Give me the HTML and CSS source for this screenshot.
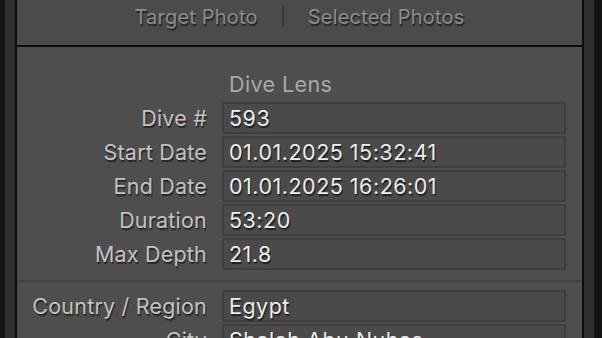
FILE: index.html
```html
<!DOCTYPE html>
<html lang="en">
<head>
    <meta charset="UTF-8">
    <meta name="viewport" content="width=device-width, initial-scale=1.0">
    <title>Dive Lens</title>
    <link rel="stylesheet" href="styles.css">
</head>
<body>

    <div class="edge"></div>
    <div class="rail"></div>

    <div class="panel">
        <div class="tabs">
            <span class="tab">Target Photo</span>
            <span class="tab-divider"></span>
            <span class="tab">Selected Photos</span>
        </div>

        <div class="content">
            <div class="section-title">Dive Lens</div>

            <div class="fields">
                <label class="label">Dive #</label>
                <div class="value">593</div>

                <label class="label">Start Date</label>
                <div class="value">01.01.2025 15:32:41</div>

                <label class="label">End Date</label>
                <div class="value">01.01.2025 16:26:01</div>

                <label class="label">Duration</label>
                <div class="value">53:20</div>

                <label class="label">Max Depth</label>
                <div class="value">21.8</div>
            </div>

            <div class="separator"></div>

            <div class="fields">
                <label class="label">Country / Region</label>
                <div class="value">Egypt</div>

                <label class="label">City</label>
                <div class="value">Shalah Abu Nuhas</div>
            </div>
        </div>
    </div>

    <div class="rail rail-right"></div>
    <div class="edge edge-right"></div>

</body>
</html>
```

FILE: styles.css
```css
body {
    margin: 0;
    height: 338px;
    overflow: hidden;
    display: flex;
    background-color: #111111;
    font-family: 'Inter', 'Noto Sans', sans-serif;
}

.edge {
    width: 5px;
    background-color: #141414;
}

.edge-right {
    width: 8px;
}

.rail {
    width: 10px;
    background-color: #2f2f2f;
}

.panel {
    flex: 1;
    border-left: 2px solid #0c0c0c;
    border-right: 2px solid #0c0c0c;
    background-color: #4e4e4e;
    display: flex;
    flex-direction: column;
}

/* top switch */
.tabs {
    flex-shrink: 0;
    height: 47px;
    box-sizing: border-box;
    padding-top: 5px;
    display: flex;
    justify-content: center;
    gap: 24px;
    background-color: #4b4b4b;
    border-bottom: 2px solid #0c0c0c;
}

.tab {
    font-size: 20px;
    line-height: 24px;
    letter-spacing: 0.2px;
    color: #8b8b8b;
    text-shadow: 1px 2px 1px rgba(0,0,0,0.55);
}

.tab-divider {
    width: 2px;
    height: 21px;
    margin-top: 1px;
    background-color: #393939;
}

.content {
    flex-shrink: 0;
    padding-top: 25px;
}

.section-title {
    margin-left: 212px;
    font-size: 21.5px;
    line-height: 24px;
    letter-spacing: 0.4px;
    color: #a9a9a9;
    margin-bottom: 6px;
}

.fields {
    display: grid;
    grid-template-columns: 190px 1fr;
    column-gap: 15px;
    row-gap: 2px;
    padding-right: 16px;
}

.label {
    text-align: right;
    align-self: center;
    font-size: 21.5px;
    letter-spacing: 0.2px;
    color: #c2c2c2;
    text-shadow: 1px 2px 1px rgba(0,0,0,0.55);
}

.value {
    height: 32px;
    box-sizing: border-box;
    border: 2px solid #3f3f3f;
    background-color: #4a4a4a;
    padding-left: 5px;
    font-size: 21.5px;
    line-height: 28px;
    letter-spacing: 0.5px;
    color: #ececec;
    text-shadow: 1px 2px 1px rgba(0,0,0,0.6);
}

.separator {
    height: 2px;
    background-color: #434343;
    margin: 10px 0 8px;
}
```
